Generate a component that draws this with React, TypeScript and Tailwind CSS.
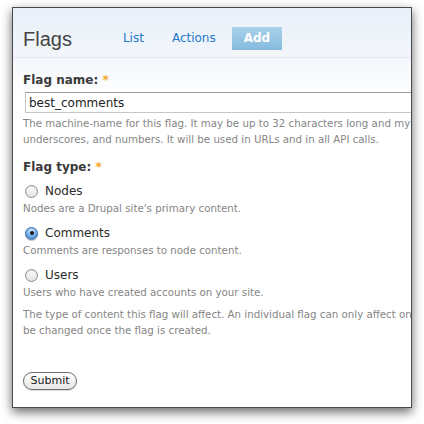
import React from 'react';

const sans = "font-['DejaVu_Sans','Verdana',sans-serif]";

function Radio({ checked }: { checked?: boolean }) {
  if (checked) {
    return (
      <span className="flex h-[13px] w-[13px] shrink-0 items-center justify-center rounded-full border border-[#3a6fa8] bg-[radial-gradient(circle_at_50%_30%,#d6ecff_0%,#7fb6ea_45%,#2f79cf_100%)] shadow-[0_1px_1px_rgba(0,0,0,0.25)]">
        <span className="h-[4px] w-[4px] rounded-full bg-[#1b1b1b]" />
      </span>
    );
  }
  return (
    <span className="h-[13px] w-[13px] shrink-0 rounded-full border border-[#8e8e8e] bg-[linear-gradient(#fdfdfd,#e2e2e2)] shadow-[inset_0_1px_1px_rgba(0,0,0,0.12)]" />
  );
}

function Option({ label, help, checked }: { label: string; help: string; checked?: boolean }) {
  return (
    <div>
      <div className="ml-[2px] flex h-[16px] items-center gap-[7px]">
        <Radio checked={checked} />
        <span className="text-[12px] leading-[16px] text-[#2b2b2b]">{label}</span>
      </div>
      <p className="mt-[1px] text-[10.25px] leading-[16px] text-[#858585]">{help}</p>
    </div>
  );
}

export default function App() {
  return (
    <div className={`h-[424px] w-[424px] bg-white pl-[12px] pt-[7px] ${sans}`}>
      <div className="h-[401px] w-[400px] overflow-hidden border border-[#4a4a4a] bg-[linear-gradient(#e7eff8_0px,#f3f7fb_50px,#ffffff_90px)] shadow-[0_4px_10px_rgba(0,0,0,0.6)]">
        {/* Header */}
        <div className="flex h-[50px] items-center border-b border-[#e3eaf1] pl-[10px] pt-[12px]">
          <h1 className="mr-[39px] font-['Liberation_Sans','Helvetica',sans-serif] text-[20px] leading-[24px] text-[#444]">
            Flags
          </h1>
          <nav className="flex gap-[4px] text-[12px]">
            <span className="px-[12px] leading-[23px] text-[#1f78cc]">List</span>
            <span className="px-[12px] leading-[23px] text-[#1f78cc]">Actions</span>
            <span className="bg-[linear-gradient(#a9d1ea,#86bbdf)] px-[12px] font-bold leading-[23px] text-white">
              Add
            </span>
          </nav>
        </div>

        {/* Form */}
        <div className="w-[480px] pl-[10px]">
          <label className="mt-[14px] block text-[12px] font-bold leading-[16px] text-[#3a3a3a]">
            Flag name: <span className="text-[#f6a623]">*</span>
          </label>
          <div className="ml-[2px] mt-[4px] flex h-[21px] items-center border border-[#c6c6c6] border-t-[#9a9a9a] bg-white pl-[3px] text-[12px] text-[#222]">
            best_comments
          </div>
          <div className="mt-[2px] text-[10.25px] leading-[16px] text-[#858585]">
            <p className="whitespace-nowrap">
              The machine-name for this flag. It may be up to 32 characters long and my only contain lowercase letters,
            </p>
            <p className="whitespace-nowrap">
              underscores, and numbers. It will be used in URLs and in all API calls.
            </p>
          </div>

          <label className="mt-[12px] block text-[12px] font-bold leading-[16px] text-[#3a3a3a]">
            Flag type: <span className="text-[#f6a623]">*</span>
          </label>
          <div className="mt-[8px] flex flex-col gap-[9px]">
            <Option label="Nodes" help="Nodes are a Drupal site's primary content." />
            <Option label="Comments" help="Comments are responses to node content." checked />
            <Option label="Users" help="Users who have created accounts on your site." />
          </div>
          <div className="text-[10.25px] leading-[16px] text-[#858585]">
            <p className="mt-[6px] whitespace-nowrap">
              The type of content this flag will affect. An individual flag can only affect one type of content. This cannot
            </p>
            <p className="whitespace-nowrap">be changed once the flag is created.</p>
          </div>

          <button className="mt-[34px] flex h-[18px] w-[54px] items-center justify-center rounded-full border border-[#6e6e6e] bg-[linear-gradient(#ffffff,#e6e6e6)] text-[11px] text-[#1a1a1a] shadow-[0_1px_1px_rgba(0,0,0,0.15)]">
            Submit
          </button>
        </div>
      </div>
    </div>
  );
}
